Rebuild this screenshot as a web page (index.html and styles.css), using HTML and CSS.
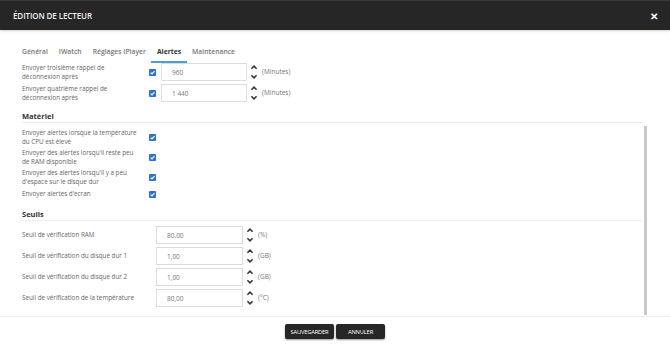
FILE: index.html
```html
<!DOCTYPE html>
<html lang="fr">
<head>
    <meta charset="UTF-8">
    <meta name="viewport" content="width=device-width, initial-scale=1.0">
    <title>Édition de lecteur</title>
    <link rel="stylesheet" href="styles.css">
</head>
<body>
    <div class="modal">
        <!-- En-tête -->
        <header class="modal-header">
            <h1>ÉDITION DE LECTEUR</h1>
            <span class="close">&#10005;</span>
        </header>

        <div class="modal-body">
            <!-- Onglets -->
            <nav class="tabs">
                <span class="tab">Général</span>
                <span class="tab">IWatch</span>
                <span class="tab">Réglages IPlayer</span>
                <span class="tab active">Alertes</span>
                <span class="tab">Maintenance</span>
            </nav>

            <div class="row">
                <label class="label">Envoyer troisième rappel de déconnexion après</label>
                <span class="check"><svg viewBox="0 0 8 8"><path d="M1.8 4.2 3.4 5.7 6.3 2.4"/></svg></span>
                <input class="field" type="text" value="960">
                <span class="spin"><svg viewBox="0 0 6 14"><path d="M1 4.5 3 2.5 5 4.5M1 9.5 3 11.5 5 9.5"/></svg></span>
                <span class="unit">(Minutes)</span>
            </div>
            <div class="row">
                <label class="label">Envoyer quatrième rappel de déconnexion après</label>
                <span class="check"><svg viewBox="0 0 8 8"><path d="M1.8 4.2 3.4 5.7 6.3 2.4"/></svg></span>
                <input class="field" type="text" value="1 440">
                <span class="spin"><svg viewBox="0 0 6 14"><path d="M1 4.5 3 2.5 5 4.5M1 9.5 3 11.5 5 9.5"/></svg></span>
                <span class="unit">(Minutes)</span>
            </div>

            <h2 class="section-title">Matériel</h2>

            <div class="row row-check">
                <label class="label">Envoyer alertes lorsque la température du CPU est élevé</label>
                <span class="check"><svg viewBox="0 0 8 8"><path d="M1.8 4.2 3.4 5.7 6.3 2.4"/></svg></span>
            </div>
            <div class="row row-check">
                <label class="label">Envoyer des alertes lorsqu'il reste peu de RAM disponible</label>
                <span class="check"><svg viewBox="0 0 8 8"><path d="M1.8 4.2 3.4 5.7 6.3 2.4"/></svg></span>
            </div>
            <div class="row row-check">
                <label class="label">Envoyer des alertes lorsqu'il y a peu d'espace sur le disque dur</label>
                <span class="check"><svg viewBox="0 0 8 8"><path d="M1.8 4.2 3.4 5.7 6.3 2.4"/></svg></span>
            </div>
            <div class="row row-check row-single">
                <label class="label">Envoyer alertes d'ecran</label>
                <span class="check"><svg viewBox="0 0 8 8"><path d="M1.8 4.2 3.4 5.7 6.3 2.4"/></svg></span>
            </div>

            <h2 class="section-title">Seuils</h2>

            <div class="row row-seuil">
                <label class="label">Seuil de vérification RAM</label>
                <input class="field" type="text" value="80.00">
                <span class="spin"><svg viewBox="0 0 6 14"><path d="M1 4.5 3 2.5 5 4.5M1 9.5 3 11.5 5 9.5"/></svg></span>
                <span class="unit">(%)</span>
            </div>
            <div class="row row-seuil">
                <label class="label">Seuil de vérification du disque dur 1</label>
                <input class="field" type="text" value="1,00">
                <span class="spin"><svg viewBox="0 0 6 14"><path d="M1 4.5 3 2.5 5 4.5M1 9.5 3 11.5 5 9.5"/></svg></span>
                <span class="unit">(GB)</span>
            </div>
            <div class="row row-seuil">
                <label class="label">Seuil de vérification du disque dur 2</label>
                <input class="field" type="text" value="1,00">
                <span class="spin"><svg viewBox="0 0 6 14"><path d="M1 4.5 3 2.5 5 4.5M1 9.5 3 11.5 5 9.5"/></svg></span>
                <span class="unit">(GB)</span>
            </div>
            <div class="row row-seuil">
                <label class="label">Seuil de vérification de la température</label>
                <input class="field" type="text" value="80,00">
                <span class="spin"><svg viewBox="0 0 6 14"><path d="M1 4.5 3 2.5 5 4.5M1 9.5 3 11.5 5 9.5"/></svg></span>
                <span class="unit">(°C)</span>
            </div>

            <!-- Barre de défilement -->
            <div class="scroll-thumb"></div>
        </div>

        <footer class="modal-footer">
            <button class="btn">SAUVEGARDER</button>
            <button class="btn">ANNULER</button>
        </footer>
    </div>
</body>
</html>
```

FILE: styles.css
```css
* {
  margin: 0;
  padding: 0;
  box-sizing: border-box;
}

body {
  font-family: "Open Sans", Arial, sans-serif;
  background-color: #fff;
  color: #555;
  width: 670px;
  height: 345px;
  overflow: hidden;
}

.modal {
  display: flex;
  flex-direction: column;
  height: 345px;
}

.modal-header {
  height: 30px;
  flex: none;
  background-color: #262626;
  border-top: 1px solid #3a3a3a;
  box-shadow: 0 1px 2px #cfcfcf;
  display: flex;
  align-items: center;
  justify-content: space-between;
  padding: 0 12px 0 13px;
}

.modal-header h1 {
  font-size: 8px;
  font-weight: 600;
  color: #eee;
  letter-spacing: -0.1px;
}

.close {
  color: #fff;
  font-size: 10px;
  font-weight: bold;
}

.modal-body {
  flex: 1;
  position: relative;
  padding: 13px 27px 0 22px;
  overflow: hidden;
}

.tabs {
  display: flex;
  margin-left: -5.5px;
  height: 20px;
}

.tab {
  font-size: 6.8px;
  font-weight: 600;
  color: #777;
  padding: 1px 5.5px 0;
  line-height: 16px;
  height: 20px;
}

.tab.active {
  color: #333;
  font-weight: 700;
  border-bottom: 2px solid #4a9fd8;
}

.row {
  display: flex;
  align-items: center;
  height: 18px;
  margin-bottom: 3px;
}

.label {
  width: 127px;
  font-size: 6.3px;
  line-height: 9.5px;
  color: #666;
  padding-right: 10px;
}

.check {
  width: 7px;
  height: 7px;
  background-color: #2a72d6;
  border-radius: 1px;
  display: flex;
  margin-right: 5px;
}

.check svg {
  width: 7px;
  height: 7px;
  fill: none;
  stroke: #fff;
  stroke-width: 1.3;
}

.field {
  width: 86px;
  height: 18px;
  border: 1px solid #dcdcdc;
  font-family: "Open Sans", Arial, sans-serif;
  font-size: 6.5px;
  color: #777;
  padding-left: 10px;
  outline: none;
}

.spin {
  width: 8px;
  height: 18px;
  margin-left: 3px;
  display: flex;
}

.spin svg {
  width: 8px;
  height: 18px;
  fill: none;
  stroke: #333;
  stroke-width: 1.2;
}

.unit {
  font-size: 6.5px;
  color: #777;
  margin-left: 4px;
  margin-bottom: 2px;
}

.section-title {
  font-size: 7.5px;
  font-weight: 700;
  color: #333;
  line-height: 12px;
  margin-top: 8px;
  border-bottom: 1px solid #eee;
  margin-bottom: 5px;
}

.row-check {
  margin-bottom: 2px;
}

.row-single {
  height: 12px;
}

.row-seuil .label {
  width: 134px;
}

.row-seuil {
  margin-bottom: 3px;
}

.row-seuil .field {
  width: 87px;
}

.scroll-thumb {
  position: absolute;
  right: 23px;
  top: 96px;
  bottom: 1px;
  width: 3px;
  background-color: #c8c8c8;
}

.modal-footer {
  height: 29px;
  flex: none;
  border-top: 1px solid #eee;
  display: flex;
  justify-content: center;
  gap: 2px;
  padding-top: 7px;
}

.btn {
  height: 15px;
  width: 49px;
  background-color: #262626;
  color: #fff;
  border: none;
  border-radius: 2px;
  font-family: "Open Sans", Arial, sans-serif;
  font-size: 5.8px;
  letter-spacing: -0.2px;
  box-shadow: 0 1px 2px #999;
}
```
